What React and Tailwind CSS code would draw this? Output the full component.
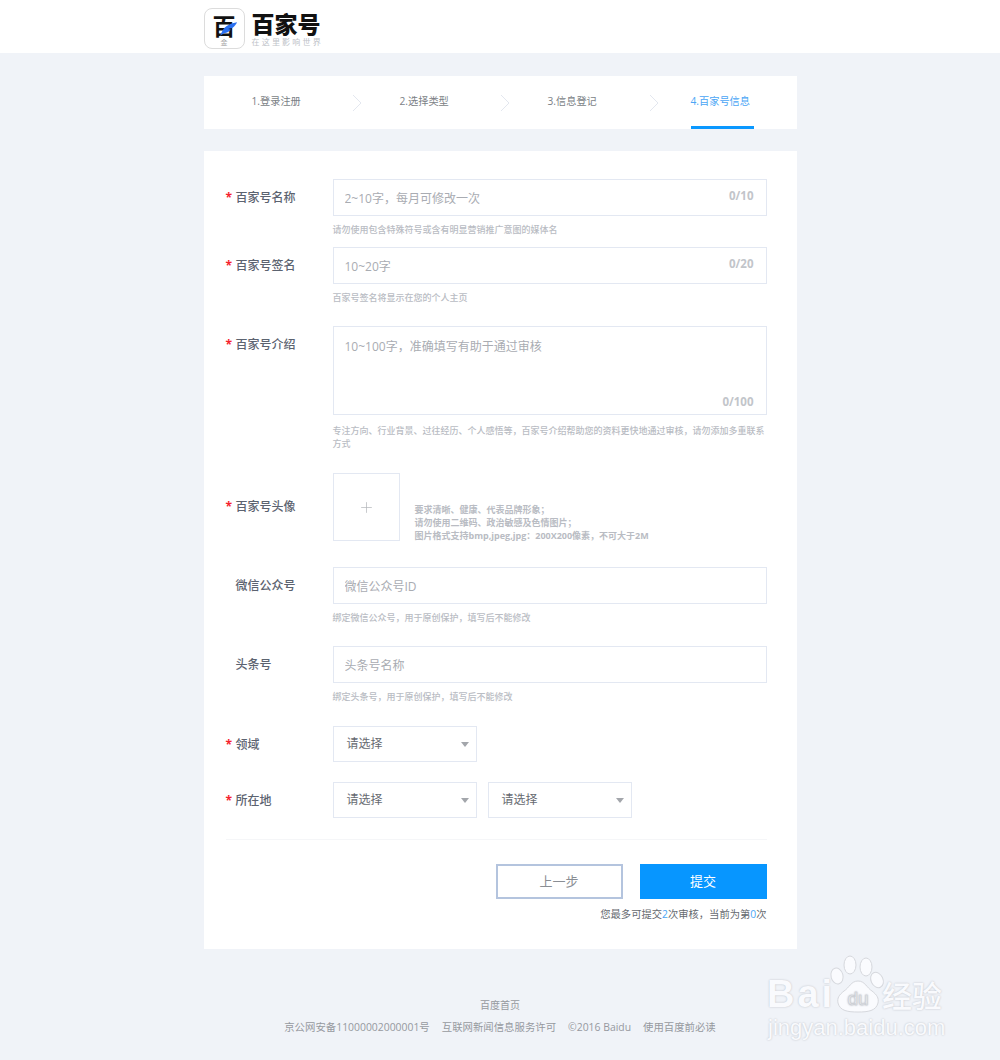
import { Plus } from "lucide-react";

const FONT = "font-['Open_Sans','Noto_Sans_CJK_SC',sans-serif]";

function Label({ text, required }) {
	return (
		<div className="flex items-center w-[107px] h-[37px] shrink-0 text-xs font-medium text-[#5c6370]">
			<span className="w-[10px] text-[#f5222d] text-xs leading-none font-bold">{required ? "*" : ""}</span>
			<span>{text}</span>
		</div>
	);
}

function Hint({ children }) {
	return <p className="mt-[7px] text-[9px] leading-[13px] text-[#b9bcc3] font-medium">{children}</p>;
}

function TextField({ label, required, placeholder, count, hint, className }) {
	return (
		<div className={`flex ${className}`}>
			<Label text={label} required={required} />
			<div className="flex-1">
				<div className="relative">
					<input
						placeholder={placeholder}
						className="w-full h-[37px] px-[11px] pt-[1px] border border-[#e3e8f2] bg-white text-xs outline-none placeholder:text-[#a9acb2]"
					/>
					{count && (
						<span className="absolute right-[13px] top-[10px] text-[11.5px] font-bold leading-[13px] text-[#c2c5ca]">{count}</span>
					)}
				</div>
				<Hint>{hint}</Hint>
			</div>
		</div>
	);
}

function SelectBox() {
	return (
		<button className="flex items-center justify-between w-[144px] h-[36px] pl-[13px] pr-[7px] border border-[#e3e8f2] bg-white text-xs text-[#666a70]">
			<span>请选择</span>
			<svg width="8" height="5" viewBox="0 0 8 5">
				<path d="M0 0h8L4 5z" fill="#a3a6ab" />
			</svg>
		</button>
	);
}

function Chevron() {
	return (
		<svg width="10" height="18" viewBox="0 0 10 18" fill="none" className="shrink-0">
			<path d="M1 1l8 8-8 8" stroke="#e3e7ef" strokeWidth="1" />
		</svg>
	);
}

function Steps() {
	return (
		<div className="flex items-center h-[53px] pl-[48px] bg-white text-[10.2px] text-[#7b7f86]">
			<span className="w-[50px] mb-[2px] whitespace-nowrap">1.登录注册</span>
			<div className="ml-[50px] mr-[38px]"><Chevron /></div>
			<span className="w-[50px] mb-[2px] whitespace-nowrap">2.选择类型</span>
			<div className="ml-[50px] mr-[38px]"><Chevron /></div>
			<span className="w-[50px] mb-[2px] whitespace-nowrap">3.信息登记</span>
			<div className="ml-[51px] mr-[32px]"><Chevron /></div>
			<div className="flex items-center w-[63px] h-full border-b-[3px] border-[#0a98ff] pt-[1px] text-[#4ba6f5] whitespace-nowrap">
				4.百家号信息
			</div>
		</div>
	);
}

function Logo() {
	return (
		<div className="flex items-start w-[593px]">
			<div className="relative flex flex-col items-center w-[41px] h-[41px] rounded-[8px] border border-[#dcdcdc] bg-white overflow-hidden">
				<span className="mt-[4px] font-['Noto_Sans_CJK_SC',sans-serif] text-[23px] leading-[25px] font-bold text-[#111]">百</span>
				<span className="mt-[1px] text-[7px] leading-[8px] text-[#a8a8a8]">金</span>
				<svg width="18" height="14" viewBox="0 0 20 15" className="absolute left-[15px] top-[13px]">
					<path d="M19 0C12 1 6 4 3 9L0 15l5-3c2 0 6-2 7-4l-3-.5L14 6c2-1 4-4 5-6z" fill="#2a6ff0" />
				</svg>
			</div>
			<div className="ml-[7px] mt-[2px]">
				<div className="text-[23px] leading-[26px] font-black text-[#111] font-['Noto_Sans_CJK_SC',sans-serif]">百家号</div>
				<div className="text-[8px] leading-[11px] tracking-[2.2px] text-[#c0c3c9]">在这里影响世界</div>
			</div>
		</div>
	);
}

function Watermark() {
	return (
		<div className="absolute left-[766px] top-[950px] w-[190px] h-[92px] text-[#f9fafd] font-['Liberation_Sans',sans-serif] [text-shadow:0_0_2px_#b9bcc3]">
			<svg width="60" height="62" viewBox="0 0 60 62" className="absolute left-[62px] top-[2px]">
				<g fill="#fafbfe" stroke="#d6d8dd" strokeWidth="1">
					<ellipse cx="9" cy="24" rx="6" ry="8" transform="rotate(-15 9 24)" />
					<ellipse cx="22" cy="13" rx="6" ry="9" />
					<ellipse cx="38" cy="15" rx="6" ry="9" />
					<ellipse cx="49" cy="28" rx="6" ry="8" transform="rotate(-25 49 28)" />
					<path d="M30 29c7 0 9 7 14 10 5 4 7 7 6 12-2 8-10 9-20 9S12 59 10 51c-1-5 1-8 6-12 5-3 7-10 14-10z" />
				</g>
				<text x="30" y="53" textAnchor="middle" fontSize="19" fontFamily="Liberation Sans" fill="#fafbfe" stroke="#c9ccd2" strokeWidth="0.5">du</text>
			</svg>
			<span className="absolute left-[1px] top-[22px] text-[38px] leading-[44px] font-bold tracking-[3px]">Bai</span>
			<span className="absolute left-[116px] top-[27px] text-[30px] leading-[34px] font-['Noto_Sans_CJK_SC',sans-serif] font-medium whitespace-nowrap">经验</span>
			<span className="absolute left-[2px] top-[64px] text-[22px] leading-[28px] whitespace-nowrap">jingyan.baidu.com</span>
		</div>
	);
}

export default function App() {
	return (
		<div className={`relative min-h-[1060px] bg-[#f0f3f8] ${FONT}`}>
			<header className="flex justify-center items-start h-[53px] pt-[8px] bg-white">
				<Logo />
			</header>

			<main className="w-[593px] mx-auto pt-[23px]">
				<Steps />

				<section className="mt-[22px] h-[798px] pt-[28px] pl-[22px] pr-[30px] bg-white">
					<TextField
						required
						label="百家号名称"
						placeholder="2~10字，每月可修改一次"
						count="0/10"
						hint="请勿使用包含特殊符号或含有明显营销推广意图的媒体名"
					/>
					<TextField
						required
						className="mt-[11px]"
						label="百家号签名"
						placeholder="10~20字"
						count="0/20"
						hint="百家号签名将显示在您的个人主页"
					/>

					<div className="flex mt-[22px]">
						<Label text="百家号介绍" required />
						<div className="flex-1">
							<div className="relative">
								<textarea
									placeholder="10~100字，准确填写有助于通过审核"
									className="block w-full h-[89px] px-[11px] py-[12px] border border-[#e3e8f2] bg-white text-xs resize-none outline-none placeholder:text-[#a9acb2]"
								/>
								<span className="absolute right-[13px] bottom-[7px] text-[11.5px] font-bold leading-[13px] text-[#c2c5ca]">0/100</span>
							</div>
							<p className="mt-[9px] text-[9px] leading-[13px] text-[#b9bcc3] font-medium">
								专注方向、行业背景、过往经历、个人感悟等，百家号介绍帮助您的资料更快地通过审核，请勿添加多重联系方式
							</p>
						</div>
					</div>

					<div className="flex items-center mt-[23px]">
						<Label text="百家号头像" required />
						<div className="flex items-end flex-1">
							<div className="flex items-center justify-center w-[67px] h-[68px] border border-[#e3e8f2] text-[#b2b5ba]">
								<Plus size={17} strokeWidth={1} />
							</div>
							<p className="ml-[15px] mb-[-1px] text-[9px] leading-[13px] text-[#b9bcc3] font-bold">
								要求清晰、健康、代表品牌形象；<br />
								请勿使用二维码、政治敏感及色情图片；<br />
								图片格式支持bmp,jpeg,jpg：200X200像素，不可大于2M
							</p>
						</div>
					</div>

					<TextField
						className="mt-[26px]"
						label="微信公众号"
						placeholder="微信公众号ID"
						hint="绑定微信公众号，用于原创保护，填写后不能修改"
					/>
					<TextField
						className="mt-[22px]"
						label="头条号"
						placeholder="头条号名称"
						hint="绑定头条号，用于原创保护，填写后不能修改"
					/>

					<div className="flex mt-[23px]">
						<Label text="领域" required />
						<SelectBox />
					</div>
					<div className="flex mt-[19px]">
						<Label text="所在地" required />
						<div className="flex gap-[11px]">
							<SelectBox />
							<SelectBox />
						</div>
					</div>

					<div className="mt-[20px] border-t border-[#f5f6f8]" />

					<div className="flex justify-end gap-[17px] mt-[24px]">
						<button className="w-[127px] h-[35px] border-2 border-[#b4c4de] bg-white text-[13px] text-[#8a8e94]">上一步</button>
						<button className="w-[127px] h-[35px] bg-[#0796ff] text-[13px] text-white">提交</button>
					</div>
					<p className="mt-[9px] text-right text-[10.3px] leading-[13px] text-[#666a70]">
						您最多可提交<span className="text-[#4ba6f5]">2</span>次审核，当前为第<span className="text-[#4ba6f5]">0</span>次
					</p>
				</section>
			</main>

			<footer className="pt-[49px] text-center text-[#96999f]">
				<p className="text-[10px] leading-[14px]">百度首页</p>
				<div className="flex justify-center gap-[12px] mt-[8px] text-[10.4px] leading-[14px]">
					<span>京公网安备11000002000001号</span>
					<span>互联网新闻信息服务许可</span>
					<span>©2016 Baidu</span>
					<span>使用百度前必读</span>
				</div>
			</footer>

			<Watermark />
		</div>
	);
}
